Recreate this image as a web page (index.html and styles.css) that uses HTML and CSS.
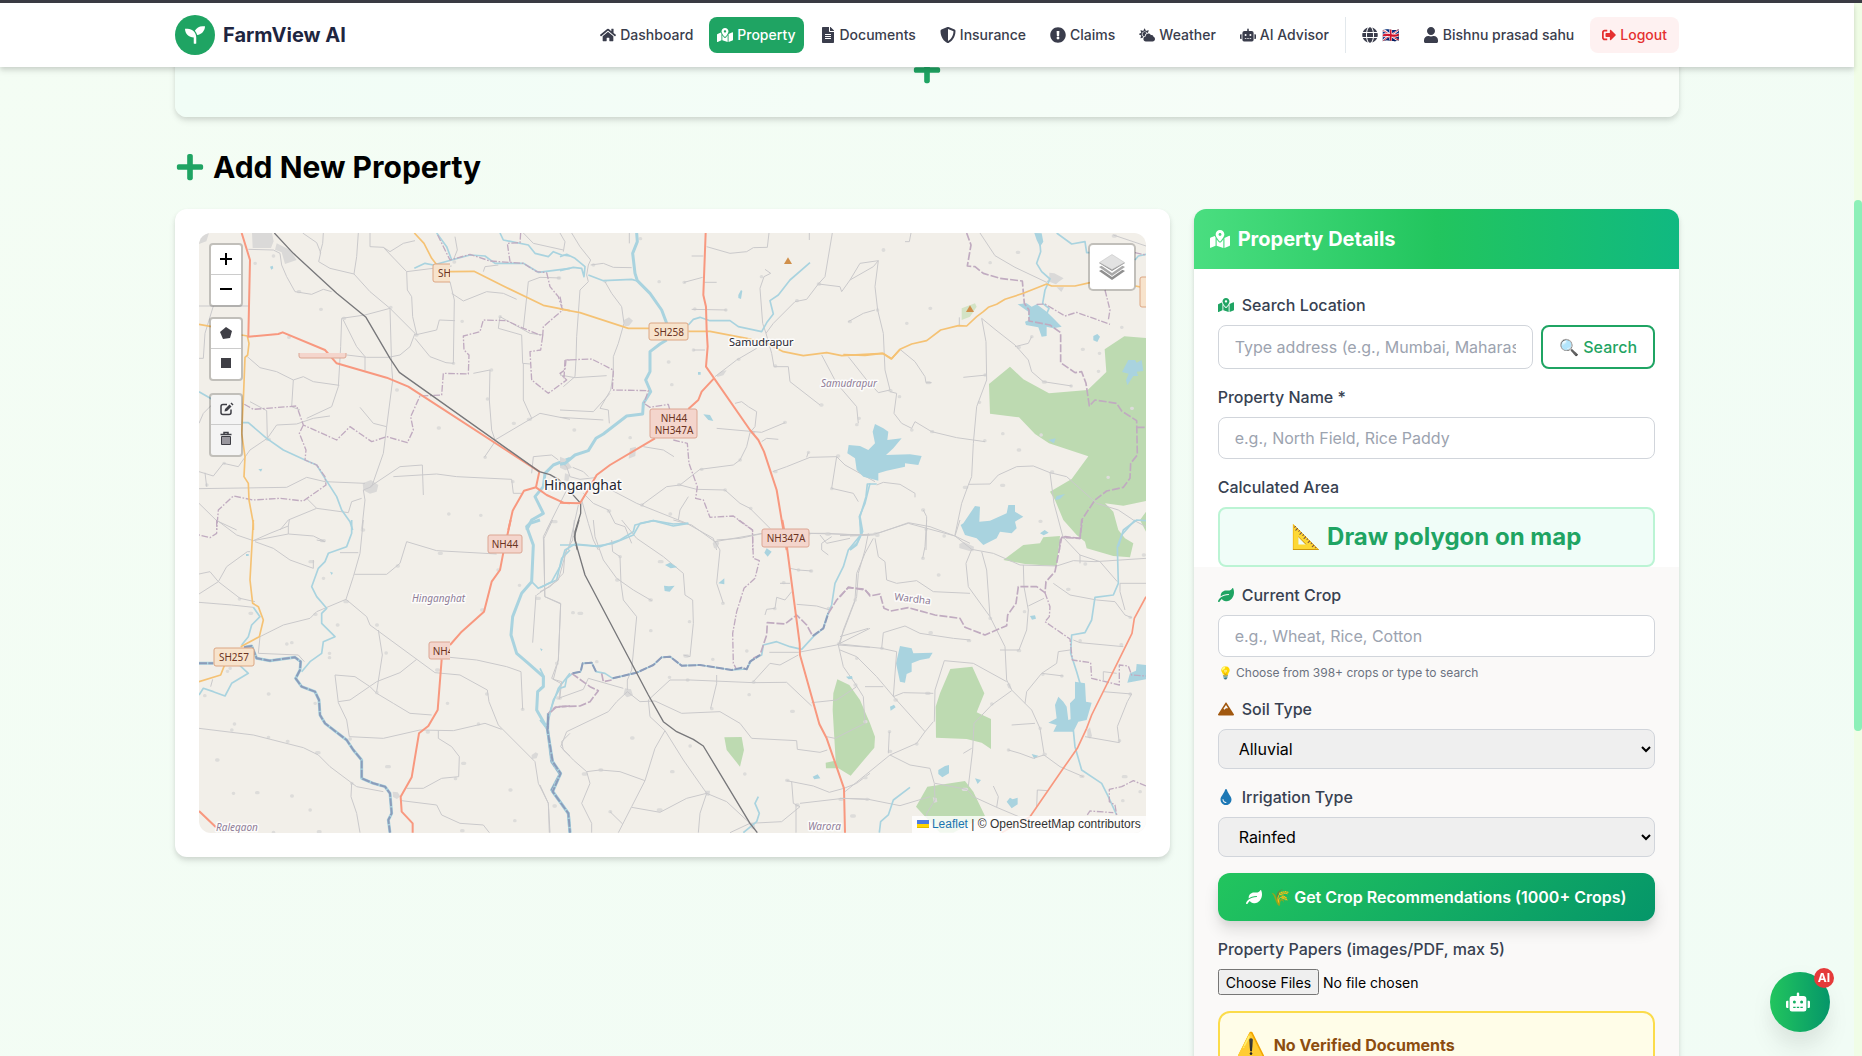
FILE: index.html
```html
<!DOCTYPE html>
<html lang="en">
<head>
<meta charset="utf-8">
<meta name="viewport" content="width=device-width, initial-scale=1">
<title>FarmView AI - Property</title>
<link rel="stylesheet" href="styles.css">
</head>
<body>
<svg class="sprite" aria-hidden="true">
  <symbol id="i-home" viewBox="0 0 576 512"><path d="M280.37 148.26L96 300.11V464a16 16 0 0 0 16 16l112.06-.29a16 16 0 0 0 15.92-16V368a16 16 0 0 1 16-16h64a16 16 0 0 1 16 16v95.64a16 16 0 0 0 16 16.05L464 480a16 16 0 0 0 16-16V300L295.67 148.26a12.19 12.19 0 0 0-15.3 0zM571.6 251.47L488 182.56V44.05a12 12 0 0 0-12-12h-56a12 12 0 0 0-12 12v72.61L318.47 43a48 48 0 0 0-61 0L4.34 251.47a12 12 0 0 0-1.6 16.9l25.5 31A12 12 0 0 0 45.15 301l235.22-193.74a12.19 12.19 0 0 1 15.3 0L530.9 301a12 12 0 0 0 16.9-1.6l25.5-31a12 12 0 0 0-1.7-16.93z"/></symbol>
  <symbol id="i-map" viewBox="0 0 576 512"><path d="M288 0c-69.59 0-126 56.41-126 126 0 56.26 82.35 158.8 113.9 196.02 6.39 7.54 17.82 7.54 24.2 0C331.65 284.8 414 182.26 414 126 414 56.41 357.59 0 288 0zm0 168c-23.2 0-42-18.8-42-42s18.8-42 42-42 42 18.8 42 42-18.8 42-42 42zM20.12 215.95A32.006 32.006 0 0 0 0 245.66v250.32c0 11.32 11.43 19.06 21.94 14.86L160 448V214.92c-8.84-15.98-16.07-31.54-21.25-46.42L20.12 215.95zM288 359.67c-14.07 0-27.38-6.18-36.51-16.96-19.66-23.2-40.57-49.62-59.49-76.72v182l192 64V266c-18.92 27.09-39.82 53.52-59.49 76.72-9.13 10.77-22.44 16.95-36.51 16.95zm266.06-198.51L416 224v288l139.88-55.95A31.996 31.996 0 0 0 576 426.34V176.02c0-11.32-11.43-19.06-21.94-14.86z"/></symbol>
  <symbol id="i-file" viewBox="0 0 384 512"><path d="M224 136V0H24C10.7 0 0 10.7 0 24v464c0 13.3 10.7 24 24 24h336c13.3 0 24-10.7 24-24V160H248c-13.2 0-24-10.8-24-24zm64 236c0 6.6-5.4 12-12 12H108c-6.6 0-12-5.4-12-12v-8c0-6.6 5.4-12 12-12h168c6.6 0 12 5.4 12 12v8zm0-64c0 6.6-5.4 12-12 12H108c-6.6 0-12-5.4-12-12v-8c0-6.6 5.4-12 12-12h168c6.6 0 12 5.4 12 12v8zm0-72v8c0 6.6-5.4 12-12 12H108c-6.6 0-12-5.4-12-12v-8c0-6.6 5.4-12 12-12h168c6.6 0 12 5.4 12 12zm96-114.1v6.1H256V0h6.1c6.4 0 12.5 2.5 17 7l97.9 98c4.5 4.5 7 10.6 7 16.9z"/></symbol>
  <symbol id="i-shield" viewBox="0 0 512 512"><path d="M466.5 83.7l-192-80a48.15 48.15 0 0 0-36.9 0l-192 80C27.7 91.1 16 108.6 16 128c0 198.5 114.5 335.7 221.5 380.3 11.8 4.9 25.1 4.9 36.9 0C360.1 472.6 496 349.3 496 128c0-19.4-11.7-36.9-29.5-44.3zM256.1 446.3l-.1-381 175.9 73.3c-3.3 151.4-82.1 261.1-175.8 307.7z"/></symbol>
  <symbol id="i-alert" viewBox="0 0 512 512"><path d="M504 256c0 136.997-111.043 248-248 248S8 392.997 8 256C8 119.083 119.043 8 256 8s248 111.083 248 248zm-248 50c-25.405 0-46 20.595-46 46s20.595 46 46 46 46-20.595 46-46-20.595-46-46-46zm-43.673-165.346l7.418 136c.347 6.364 5.609 11.346 11.982 11.346h48.546c6.373 0 11.635-4.982 11.982-11.346l7.418-136c.375-6.874-5.098-12.654-11.982-12.654h-63.383c-6.884 0-12.356 5.78-11.981 12.654z"/></symbol>
  <symbol id="i-weather" viewBox="0 0 640 512"><path d="M575.2 325.7c.2-1.9.8-3.7.8-5.6 0-35.3-28.7-64-64-64-12.6 0-24.2 3.8-34.1 10-17.6-38.8-56.5-66-101.9-66-61.8 0-112 50.1-112 112 0 3 .7 5.8.9 8.7-49.6 3.7-88.9 44.7-88.9 95.3 0 53 43 96 96 96h272c53 0 96-43 96-96 0-42.1-27.2-77.4-64.8-90.4zm-430.4-22.6c-43.7-43.7-43.7-114.7 0-158.3 43.7-43.7 114.7-43.7 158.4 0 9.7 9.7 16.9 20.9 22.3 32.7 9.8-3.7 20.1-6 30.7-7.5L386 81.1c4-11.9-7.3-23.1-19.2-19.2L279 91.2 237.5 8.4C232-2.8 216-2.8 210.4 8.4L169 91.2 81.1 61.9C69.3 58 58 69.3 61.9 81.1l29.3 87.8-82.8 41.5c-11.2 5.6-11.2 21.5 0 27.1l82.8 41.4-29.3 87.8c-4 11.9 7.3 23.1 19.2 19.2l76.1-25.3c6.1-12.4 14-23.7 23.6-33.5-13.1-5.4-25.4-13.4-36-24zm-4.8-79.2c0 40.8 29.3 74.8 67.9 82.3 8-4.7 16.3-8.8 25.2-11.7 5.4-44.3 31-82.5 67.4-105C287.3 160.4 258 140 224 140c-46.3 0-84 37.6-84 83.9z"/></symbol>
  <symbol id="i-robot" viewBox="0 0 640 512"><path d="M32,224H64V416H32A31.96,31.96,0,0,1,0,384V256A31.96,31.96,0,0,1,32,224Zm512-48V448a64.06,64.06,0,0,1-64,64H160a64.06,64.06,0,0,1-64-64V176a79.97,79.97,0,0,1,80-80H288V32a32,32,0,0,1,64,0V96H464A79.97,79.97,0,0,1,544,176ZM264,256a40,40,0,1,0-40,40A40,40,0,0,0,264,256Zm-8,128H192v32h64Zm96,0H288v32h64ZM456,256a40,40,0,1,0-40,40A40,40,0,0,0,456,256Zm-8,128H384v32h64ZM640,256V384a31.96,31.96,0,0,1-32,32H576V224h32A31.96,31.96,0,0,1,640,256Z"/></symbol>
  <symbol id="i-globe" viewBox="0 0 496 512"><path d="M336.5 160C322 70.7 287.8 8 248 8s-74 62.7-88.5 152h177zM152 256c0 22.2 1.2 43.5 3.3 64h185.3c2.1-20.5 3.3-41.8 3.3-64s-1.2-43.5-3.3-64H155.3c-2.1 20.5-3.3 41.8-3.3 64zm324.7-96c-28.6-67.9-86.5-120.4-158-141.6 24.4 33.8 41.2 84.7 50 141.6h108zM177.2 18.4C105.8 39.6 47.8 92.1 19.3 160h108c8.7-56.9 25.5-107.8 49.9-141.6zM487.4 192H372.7c2.1 21 3.3 42.5 3.3 64s-1.2 43-3.3 64h114.6c5.5-20.5 8.6-41.8 8.6-64s-3.1-43.5-8.5-64zM120 256c0-21.5 1.2-43 3.3-64H8.6C3.2 212.5 0 233.8 0 256s3.2 43.5 8.6 64h114.6c-2-21-3.2-42.5-3.2-64zm39.5 96c14.5 89.3 48.7 152 88.5 152s74-62.7 88.5-152h-177zm159.3 141.6c71.4-21.2 129.4-73.7 158-141.6h-108c-8.8 56.9-25.6 107.8-50 141.6zM19.3 352c28.6 67.9 86.5 120.4 158 141.6-24.4-33.8-41.2-84.7-50-141.6h-108z"/></symbol>
  <symbol id="i-user" viewBox="0 0 448 512"><path d="M224 256c70.7 0 128-57.3 128-128S294.7 0 224 0 96 57.3 96 128s57.3 128 128 128zm89.6 32h-16.7c-22.2 10.2-46.9 16-72.9 16s-50.6-5.8-72.9-16h-16.7C60.2 288 0 348.2 0 422.4V464c0 26.5 21.5 48 48 48h352c26.5 0 48-21.5 48-48v-41.6c0-74.2-60.2-134.4-134.4-134.4z"/></symbol>
  <symbol id="i-logout" viewBox="0 0 512 512"><path d="M497 273L329 441c-15 15-41 4.5-41-17v-96H152c-13.3 0-24-10.7-24-24v-96c0-13.3 10.7-24 24-24h136V88c0-21.4 25.9-32 41-17l168 168c9.3 9.4 9.3 24.6 0 34zM192 436v-40c0-6.6-5.4-12-12-12H96c-17.7 0-32-14.3-32-32V160c0-17.7 14.3-32 32-32h84c6.6 0 12-5.4 12-12V76c0-6.6-5.4-12-12-12H96c-53 0-96 43-96 96v192c0 53 43 96 96 96h84c6.6 0 12-5.4 12-12z"/></symbol>
  <symbol id="i-plus" viewBox="0 0 448 512"><path d="M416 208H272V64c0-17.67-14.33-32-32-32h-32c-17.67 0-32 14.33-32 32v144H32c-17.67 0-32 14.33-32 32v32c0 17.67 14.33 32 32 32h144v144c0 17.67 14.33 32 32 32h32c17.67 0 32-14.33 32-32V304h144c17.67 0 32-14.33 32-32v-32c0-17.67-14.33-32-32-32z"/></symbol>
  <symbol id="i-leaf" viewBox="0 0 576 512"><path d="M546.2 9.7c-5.6-12.5-21.6-13-28.3-1.2C486.9 62.4 431.4 96 368 96h-80C182 96 96 182 96 288c0 7 .8 13.7 1.5 20.5C161.3 262.8 253.4 224 384 224c8.8 0 16 7.2 16 16s-7.2 16-16 16C132.6 256 26 410.1 2.4 468c-6.6 16.3 1.2 34.9 17.5 41.6 16.4 6.8 35-1.1 41.8-17.3 1.5-3.6 20.9-47.9 71.9-90.6 32.4 43.9 94 85.8 174.9 77.2C465.5 467.5 576 326.7 576 154.3c0-50.2-10.8-102.2-29.8-144.6z"/></symbol>
  <symbol id="i-mountain" viewBox="0 0 640 512"><path d="M634.92 462.7l-288-448C341.03 5.54 330.89 0 320 0s-21.03 5.54-26.92 14.7l-288 448a32.001 32.001 0 0 0-1.17 32.64A32.004 32.004 0 0 0 32 512h576c11.71 0 22.48-6.39 28.09-16.67a31.983 31.983 0 0 0-1.17-32.63zM320 91.18L405.39 224H320l-64 64-38.06-38.06L320 91.18z"/></symbol>
  <symbol id="i-drop" viewBox="0 0 352 512"><path d="M205.22 22.09c-7.94-28.78-49.44-30.12-58.44 0C100.01 179.85 0 222.72 0 333.91 0 432.35 78.72 512 176 512s176-79.65 176-178.09c0-111.75-99.79-153.34-146.78-311.82zM176 448c-61.75 0-112-50.25-112-112 0-8.84 7.16-16 16-16s16 7.16 16 16c0 44.11 35.89 80 80 80 8.84 0 16 7.16 16 16s-7.16 16-16 16z"/></symbol>
  <symbol id="i-seedling" viewBox="0 0 512 512"><path d="M64 96H0c0 123.7 100.3 224 224 224v144c0 8.8 7.2 16 16 16h32c8.8 0 16-7.2 16-16V320C288 196.3 187.7 96 64 96zm384-64c-84.2 0-157.4 46.5-195.7 115.2 27.7 30.2 48.2 66.9 59 107.6C424 243.1 512 147.9 512 32h-64z"/></symbol>
</svg>

<div class="app">
  <div class="window">
    <header class="topbar">
      <div class="container topbar-row">
        <a class="brand" href="#">
          <span class="brand-mark"><svg class="icon icon-20"><use href="#i-seedling"/></svg></span>
          <span>FarmView AI</span>
        </a>
        <nav class="nav" aria-label="Main">
          <a class="nav-link" href="#"><svg class="icon"><use href="#i-home"/></svg>Dashboard</a>
          <a class="nav-link nav-link-active" href="#"><svg class="icon"><use href="#i-map"/></svg>Property</a>
          <a class="nav-link" href="#"><svg class="icon"><use href="#i-file"/></svg>Documents</a>
          <a class="nav-link" href="#"><svg class="icon"><use href="#i-shield"/></svg>Insurance</a>
          <a class="nav-link" href="#"><svg class="icon"><use href="#i-alert"/></svg>Claims</a>
          <a class="nav-link" href="#"><svg class="icon"><use href="#i-weather"/></svg>Weather</a>
          <a class="nav-link" href="#"><svg class="icon"><use href="#i-robot"/></svg>AI Advisor</a>
          <div class="nav-account">
            <button class="nav-link" type="button" aria-label="Language"><svg class="icon"><use href="#i-globe"/></svg><span>🇬🇧</span></button>
            <a class="nav-link" href="#"><svg class="icon"><use href="#i-user"/></svg>Bishnu prasad sahu</a>
            <button class="nav-link nav-logout" type="button"><svg class="icon icon-14"><use href="#i-logout"/></svg>Logout</button>
          </div>
        </nav>
      </div>
    </header>

    <main class="container page">
      <section class="add-card"><svg class="icon icon-30"><use href="#i-plus"/></svg></section>

      <h2 class="page-title"><svg class="icon icon-30"><use href="#i-plus"/></svg>Add New Property</h2>

      <div class="columns">
        <section class="card map-card">
          <div class="map">
            <svg class="map-art" viewBox="0 0 947 600" preserveAspectRatio="xMinYMin slice" role="img" aria-label="Map of Hinganghat and Samudrapur">
              <!-- north-west -->
              <g transform="scale(.33333) translate(-87 -99)">
                <path class="town" d="M246 99h60l5 25-8 20h-55zM320 130l40 20 20 30-35 12-10-35-20-8zM87 99h30l-8 25-22 8zM578 850l25-10 22 15-5 20-20 6-20-10z"/>
                <path class="dots" d="M255 190h1M310 168h1M452 328h2M520 355h4M662 322h1M738 405h3M852 186h2M876 364h1M990 350h1M850 490h1M945 772h1M805 684h3M952 597h1M1030 670h3M1075 658h6M292 718h6M385 275h4M162 790h1M110 855h1M356 412h2M680 570h2M964 510h1M1165 234h4M836 942h1M932 946h1M1028 845h1M1150 965h8"/>
                <path class="road" d="M235 148L310 150 330 160 335 195 350 230 375 275 425 283 460 268 485 275M398 99L440 128 452 158 446 185 480 205 552 222 600 275 660 325 735 400 720 440 690 465 655 472 590 472 530 465M460 99L458 130 450 160M565 99L560 170 552 222M600 99V140L640 142 660 155 700 130 735 122M640 142L710 215 845 198M710 215L712 270 725 290 728 350 740 402M735 405L800 390 808 360 855 362M840 245L853 300 850 490 828 488 780 470 735 415M845 280L880 303 950 275 1000 280 1040 298M1060 385L1075 245 1110 232 1170 234M515 355L585 345 660 325M515 355L512 440 505 560 485 620 410 655M520 360L560 440 585 470 585 512M660 325L665 500 668 540 650 680 640 760 605 860 580 870 585 900 575 990M232 470L270 503 320 515 370 540 400 530 430 545 508 556M370 540L365 620 390 630M240 605L290 632 292 715M130 318L105 400 100 475H87M87 318H235M990 350L1080 400 1120 405M990 350L985 385 1055 405 1058 490 1080 492M1060 490V600L1085 655M910 520L960 510 958 600 965 690 975 720 1080 658 1110 640 1200 658M975 725L943 772M1085 820L1090 770 1145 765 1165 780M87 815L130 828 160 790 205 800 240 750 292 715 320 675 380 672M105 818L110 860M87 866L350 862 410 832 465 845 585 850M600 860L690 800 757 795 760 885M670 830L800 822 860 830 1025 838 1030 880H1055M87 910L140 962 200 990M87 670L100 640 125 615M380 672L430 655 480 648M570 622L610 670 650 680M535 938L440 925 355 960 330 990M440 925L410 895M535 938L545 905 575 895M1130 990L1190 870M1060 99L1090 130 1180 150M855 110L862 150 850 180M940 215L945 200 985 195"/>
                <path class="river" d="M733 205L765 190 790 195 845 180 900 165 945 168 975 190 1060 190 1105 217 1200 205M800 99L830 140 845 180M990 99L1000 120 1075 135 1095 160 1135 170 1150 155 1175 165 1200 168M87 575L125 597M215 668H235L290 715 340 750 410 782 440 795 465 835 500 890 515 930 540 965 548 990"/>
                <path class="river wide" d="M1200 775L1150 795 1125 820 1120 860 1095 890 1120 940 1085 960 1070 990"/>
                <path class="water" d="M300 200l8-3 2 8-6 4zM265 808l12-2-4 9z"/>
                <path class="border" d="M1130 218L1140 260 1165 290 1178 330 1120 380 1118 408 1060 385 1010 362 940 360 930 395 880 408 882 450 897 465 895 522 820 520 815 585 750 588 722 650 730 690 712 728 650 710 605 725 540 680 500 720 400 675 380 618 250 628 218 610M400 675L388 700 408 750 405 780 440 795 465 830 468 855 400 903 330 895 250 900 190 888 145 930 140 990M1118 408L1112 450 1080 455 1085 540 1135 580 1190 540 1170 520 1185 510 1188 480H1200M803 105L840 180 900 163 960 183 1060 190 1100 215 1130 218M1052 99L1050 128 1012 130 1020 185"/>
                <path class="state" d="M733 99L762 130 785 175 805 200 840 215 912 214 1000 258 1120 316 1200 332M87 373L125 380M215 405L232 408 237 430 233 465 225 472 220 600 215 700 225 770 222 830 235 850 237 900 250 970V990"/>
                <path class="trunk" d="M215 99L240 180 235 410 325 402 338 397 465 450 500 490 650 533 715 560 1108 815 1098 862 1062 872 1028 932 1015 990M1098 862L1130 885 1180 908 1200 910"/>
                <path class="rail" d="M313 99L370 160 500 280 588 352 660 475 688 517 1108 815 1140 824 1165 838"/>
              </g>
              <!-- north -->
              <g transform="scale(.33333) translate(1083 -69)">
                <path class="town" d="M192 330l15-8 12 10-12 15-14 2zM470 495l15-12 15-2-10 15-18 5zM0 740l18 8 18 25-20 8-16-8zM210 715l18-5-2 28-20 8zM15 790l15 5-5 18-12-2z"/>
                <path class="dots" d="M297 215h1M372 217h2M240 86h2M404 297h1M497 300h1M325 456h2M335 524h1M210 683h1M400 420h1M424 778h2M540 750h1M495 840h1M356 824h3M245 885h2M145 903h4M330 912h2M572 895h1M635 965h1M535 448h2M674 637h2M575 667h6M645 785h3M745 727h1M833 738h3M815 836h1M783 585h3M890 644h1M897 625h1M970 120h1M952 300h1M868 335h3M710 272h2M775 222h4M604 200h1M645 468h2M42 660h2M990 542h3M465 998h6M745 972h2M805 972h3M100 165h1M135 214h1"/>
                <path class="road" d="M35 69L60 110 92 150 85 165 80 195 85 215 60 240 55 310 50 380 48 450 45 500 10 530M0 495L45 503 140 497M92 165L130 160 160 172 215 173M208 69V100M135 215L155 250 185 290 192 340 175 400 160 440V490L152 540 120 595 145 600 148 640M150 550L100 605 0 600M0 622L130 630M440 110L510 130 560 125 580 113 622 112 627 69M395 138H430M372 217L428 202M430 217H470M395 298L500 300M817 69L795 200 775 222 840 230 845 245 870 210 900 160 955 152 945 230 953 300 970 370 975 480 990 540 955 548 920 510 865 440M870 210L940 170 955 152M945 300L910 310 865 335M775 222L740 268 705 275 640 340 618 370 608 340 600 235 612 200 632 190 615 178M618 370L635 430 642 470 685 470 690 515 780 585M590 415L530 450 465 500M785 435L830 520 890 590 895 640M435 420H400M525 580L545 575 565 590 590 605 585 650 570 668M470 655L605 667 675 638M570 668L560 710 540 750 520 765 420 778 360 825 320 830 245 885M605 695L620 685 655 688M638 785L680 770 750 742 830 740 855 765 945 815M740 742L745 727M830 740L815 835 880 850 895 875M360 825L410 838 495 840 540 880 570 895 630 955M250 710L310 720 342 740M150 838L230 880 380 940 460 985 470 1020M385 860L360 900 355 930M0 755L20 770 30 800 60 808 105 803M38 772L70 785 85 800M70 850L100 880 145 900 165 940 195 950 215 1000M65 870L85 940 100 990 115 1020M55 885L25 1020M470 990L540 985 610 970M745 970L800 970 890 975M800 1000L870 985M800 1000L780 975M748 69V90M0 69L15 95 10 125"/>
                <path class="river wide" d="M230 69L232 95 218 130 225 190 232 212 270 250 305 300 320 340M320 390L300 402 270 425V485L257 510 272 545 250 580 248 612 200 618 130 672 108 685 85 722 45 735 15 760 0 763"/>
                <path class="river" d="M0 140L20 133 45 145 75 170 72 200 65 175 40 172 0 182M85 195L130 212 215 208 232 213M385 345L400 328 420 322 450 332 510 332 535 350 605 365 622 335 640 312 630 272 655 255 690 210 750 158M0 1005H60L120 1010 180 990 220 965 225 945 280 932 340 942 385 940M930 820L915 880 898 920 905 970 890 1005 870 1020"/>
                <path class="water" d="M535 255l8-15 4 3-4 24-8-3zM430 613l20 2 10 18-15-3zM414 486h8v8h-8z"/>
                <path class="border" d="M12 505L15 450 95 447 160 480 157 540 265 542 252 580 270 592 325 583 332 610M340 690L382 700 387 760 412 830 407 865 430 870 450 922 520 918 578 960V1020M0 260L8 300"/>
                <path class="state" d="M0 297L60 308 205 355H270M385 364H450L560 385 620 400 670 425 730 437 800 428 845 437 970 430 995 446 1020 418"/>
                <path class="rail" d="M-5 808L35 850 62 880V910L45 965V990L52 1020"/>
                <path class="trunk" d="M437 69L430 255 438 290 440 360 443 410 438 470 570 660 595 690 612 725 650 840 680 1020M462 505L425 545 415 570 385 597M285 685L150 765 110 795 90 830 60 880 0 878"/>
                <path class="peak" d="M672 162h24l-12-20z"/>
              </g>
              <!-- north-east -->
              <g transform="scale(.33333) translate(1953 -69)">
                <path class="forest" d="M480 470L520 508 597 550 713 540 769 486 764 418 823 379 888 384V873L820 887 765 880 790 905 805 960 825 985 850 1000 840 1042 790 1038 710 1015 705 995 680 975 640 930 615 870 600 845 665 807 715 739 597 700 555 672 507 622 420 611 417 522zM888 905L870 930 888 965z"/>
                <path class="park" d="M335 295L375 280 380 290 360 320 335 330z"/>
                <path class="town" d="M598 188l15 2 28 15-15 10-8 8-20-8zM620 232h22l-8 14z"/>
                <path class="dots" d="M502 127h4M100 120h1M240 295h2M170 340h1M545 380h1M505 412h3M697 418h3M748 430h1M745 484h1M815 352h1M580 516h6M663 528h1M405 495h1M404 692h1M573 675h1M505 720h4M455 826h6M343 832h7M774 802h1M605 786h3M458 671h1M388 577h1M185 660h1M245 665h3M148 560h1M232 518h6M218 900h3M228 958h1M570 934h3M790 78h6M420 158h1M845 595h2M335 1008h12M80 976h4"/>
                <path class="water" d="M75 642L100 655 115 665 112 690 155 685 130 715 108 735 180 733 215 738 205 765 165 760 165 770 110 782 85 790 85 812 40 800 20 780 15 745-8 730-4 705 30 708 55 720 75 700 68 665zM503 283L530 280 545 290 560 283 590 305 610 325 635 350 610 355 590 350 590 378 575 380 565 352 528 345 525 335 537 330 535 305zM730 378l12-6 8 8-8 16-12-5zM835 450h20l5 8 15-8 5 33-20 2 5 13-15 0-18 28-4-15 8-20-20-5zM553 69L575 70 580 95 570 110 560 90zM340 940L375 888 390 890 388 935 420 932 470 910 475 885 495 885 495 905 520 920 495 935 500 955 485 970 450 965 440 985 400 1005 380 985 345 975 332 945zM615 870l5-12 25-6-15 15zM595 690l22-5-5 15zM570 970l14-10 12 8-15 8z"/>
                <path class="road" d="M183 69L178 95H165M390 69L435 137 495 172 590 217 600 205M395 325L408 395 410 510 380 590 370 700 365 800 355 825 335 880 315 975M395 325L435 358 495 405 535 450 545 485 580 515 665 528M545 380L535 400 495 410M410 495L340 502M150 418L195 455 225 500 228 518H245M120 545L140 550 132 610 155 640 185 655 195 635 245 665 320 683 405 695M355 823L420 822 445 795 500 770 550 768 600 788 650 800 740 880 805 900 850 930 888 950M600 788L612 880 640 985M0 978L70 975 175 938 240 950 315 978 360 1000M220 900L230 920 228 1020M80 825L100 817 150 823 195 850V862M328 345V322M790 75L888 108"/>
                <path class="river" d="M570 100L572 125 560 160 575 185 600 207 585 240 578 280 597 295 590 312M620 69L665 102 705 95 710 128H718M855 150L865 138 888 133M80 822H52L48 860 30 920 38 965 20 1000 0 1018M888 932L860 930 820 960 805 1010"/>
                <path class="border thick" d="M350 69L363 105 352 168 375 170 400 190 450 205 517 213 523 280 537 300 537 333 600 345 632 368 632 458 675 488 695 485 708 520 718 588 735 570 800 580 815 603 860 632 862 735 842 760 840 805 820 832 770 843 735 870 695 930 690 985 645 980 630 990 628 1020M860 652H888"/>
                <path class="border" d="M560 283L585 282 645 318 680 307 780 343M765 240L780 300 775 330M855 128L888 135"/>
                <path class="state" d="M-20 434L45 436 97 430 124 447 150 418 185 402 230 392 272 360 325 347 350 348 380 320 400 305 415 292 440 283 465 268 520 250 590 222 605 228 675 228 720 218M857 228L880 233"/>
                <path class="peak" d="M348 306h24l-12-20z"/>
              </g>
              <!-- south-west -->
              <g transform="scale(.33333) translate(-87 861)">
                <path class="town" d="M668 815l15 2 8 12-10 8-12-6zM1085 705l12-8 8 4-5 14-15 2z"/>
                <path class="dots" d="M365 368h1M350 372h1M502 315h2M478 400h1M478 413h1M620 315h2M525 245h7M577 30h4M460 175h1M420 125h8M455 62h8M208 237h1M240 280h5M435 283h3M295 522h2M185 630h1M193 612h1M295 652h1M352 664h2M140 720h4M440 698h7M260 818h4M190 820h1M365 828h2M650 740h8M545 790h1M620 518h1M648 399h1M800 450h5M832 550h1M435 550h1M772 636h3M878 730h6M856 776h1M1020 810h3M1057 568h2M1160 430h1M950 522h1M935 270h6M682 138h3M808 100h6M1100 235h8M984 150h1M1048 196h1M1152 858h1M1163 534h8M445 935h5M875 932h4M310 937h1M1034 902h1M420 870h1M180 445h1M172 454h1M104 527h1M925 612h1M540 657h1"/>
                <path class="road" d="M140 0L200 45 250 62 300 40 355 18 358 0M355 18V42L250 62M355 42L430 48 465 65 440 60M255 65L310 85 360 120 430 145V120M240 95L232 95 170 140 145 185 120 155 87 162M145 185L87 222M145 185L210 235 255 245M87 247L185 255 250 262M580 0L570 100 550 170 528 238 590 290 600 315 795 458 870 465 952 510 957 545 985 615 1095 725 1105 790 1135 850 1140 938M528 238L440 275 420 295 340 315 270 350 265 400 385 405 403 425M510 98H565M553 163H650L690 130 710 65 800 92 980 102M625 330L637 405 620 515M740 418L690 458 620 485 540 540 505 545M505 548L495 465 555 470 600 500 620 520 670 550 720 580 785 585M505 548L530 600 538 650 640 655 750 630 850 632 945 610 995 628M805 632V655L845 680 868 710 866 770 815 775 760 805 710 805M87 625L250 645 400 683 445 705 480 740 540 785 560 800 640 815M545 790L543 830 560 880 570 938M695 842L800 855 815 885 870 910 940 915 958 938M840 412L920 420 1010 440 1053 455 1058 568M1145 0L1120 50 1125 230 1172 250 1165 420 1145 475 1172 490 1168 538M1098 225L1088 368M1100 225L1165 180 1190 90M1200 640L1175 665 1180 690 1200 708M128 478L122 500"/>
                <path class="river" d="M545 0V40L530 80 475 100 465 125 445 145 425 200 440 230 470 265 455 280V310L495 350 460 365 455 400 420 425 395 455M250 262L270 290 245 315 235 350 215 375M87 525L100 505 130 515 165 528 185 490 235 460 210 437M1085 185L1105 205 1160 180 1175 115 1200 90M1200 460L1165 505 1145 560 1135 590"/>
                <path class="river wide" d="M1110 0L1080 10 1070 20 1090 75 1085 185 1055 220 1028 290 1023 345 1040 400 1075 430 1120 470V500L1103 515 1100 570 1133 628M87 430H130M222 382L245 378 260 415 300 422 375 412 392 425 390 450 377 475 395 500 435 515 447 540 450 585 465 610 530 660 550 690 575 720V775L610 790 645 800 660 820 665 880 655 900 660 938M1135 580L1133 628 1145 725 1170 762 1145 810 1195 880 1200 938"/>
                <path class="water" d="M1110 385l8 3-4 6zM480 155l9 3-4 7zM228 102h8v6h-8z"/>
                <path class="border" d="M140 0V40L120 53 87 45"/>
                <path class="riverborder" d="M87 430H130M222 382L245 378 260 415 300 422 375 412 392 425 390 450 377 475 395 500 435 515 447 540 450 585 465 610 530 660 550 690 575 720V775L610 790 645 800 660 820 665 880 655 900 660 938M1135 580L1133 628 1145 725 1170 762 1145 810 1195 880 1200 938"/>
                <path class="border thick" d="M1200 558L1155 562 1135 580"/>
                <path class="state" d="M250 0L240 180 248 250 265 260 280 300 268 350 212 380M163 437L152 465 87 485"/>
                <path class="trunk" d="M1022 0L1012 46M1000 98L990 150 965 185 942 275 875 335 840 375M815 418L803 570 775 618 747 640 725 772 692 830 695 875 728 910V938M87 873L138 922"/>
              </g>
              <!-- south -->
              <g transform="scale(.33333) translate(1023 861)">
                <path class="forest" d="M892 478L928 495 960 540 990 610 1005 650 1003 683 932 767 888 740 878 570 880 520zM553 652L605 651 612 690 600 740 560 690zM857 728L885 722 900 745 858 745z"/>
                <path class="town" d="M255 505l18 3 6 18-18 6-10-10zM518 70l12-8 8 8-8 16-8-2zM495 812h15l-2 16-10-2zM625 908l18 2 4 20-12-4z"/>
                <path class="dots" d="M98 278h2M117 280h8M332 332h1M50 430h1M170 425h1M518 418h1M275 654h4M395 755h4M130 762h8M180 750h5M210 875h2M355 870h8M45 858h1M330 240h4M230 180h4M240 110h1M358 125h8M548 250h2M620 393h1M627 524h1M755 574h5M515 566h1M640 486h2M448 305h1M435 408h8M730 188h2M812 153h3M704 266h1M865 265h1M895 372h3M975 605h3M945 495h3M740 781h4M900 838h6M770 855h4M935 888h8M450 678h1M614 762h1M775 150h1M860 42h4M442 480h2M388 472h1"/>
                <path class="road" d="M38 0L12 55 14 230 62 252 55 420 40 478 65 485 60 530M103 0L98 60 75 100 70 160 30 200 0 215M160 0L165 50 190 120 230 175 280 210 335 242M215 60L218 95 240 110 243 190 250 240 290 290 275 450 262 480V510M245 0L290 55 370 110 430 160 435 225 458 240 460 310 450 410 430 405M400 0L455 15 525 65 540 90 530 190 550 250M525 65L667 40M805 40L990 45M875 50L845 70V90L865 105M750 145L775 150 815 153M755 215L735 240 710 232 705 265 680 268 675 285M770 253L830 258 870 270M720 190H750M688 397H775L890 375 990 325M895 375L990 382M895 375L950 230 955 160 975 90 985 40M55 535L130 508 145 475 250 505M325 540L390 480H450L640 488 740 487 780 525 815 558M640 485L690 430 720 435 775 405M530 465V490L512 565M262 515L300 545 345 543 425 580 540 575 600 610 635 655 770 662 772 688 840 697 862 690M262 515L230 545 205 575 80 635 62 680 100 720 140 755 180 750 240 755 315 782 275 860 235 938M315 782L345 685 375 632 330 590 325 540M375 632L430 720 500 820 560 845 630 910 725 905 780 860 760 850 755 785M500 820L480 880 475 938M500 820L440 835 360 877 275 862M210 875L248 912M140 755L150 790 125 850 155 910V938M740 782L820 798 868 817 912 805 950 790 990 760M780 850L910 835 990 838M768 855V938M815 548L890 540 950 500M860 650L885 655 975 610 970 530 945 490 910 440 895 375M630 910L570 938M0 795L25 850 28 938"/>
                <path class="river" d="M0 203L35 185 60 140 75 90 105 72 170 78 220 70 280 45 300 10 340 2 400 18 445 10M28 590L40 540 60 505 75 500 80 475 98 460 122 455 128 430 155 428 168 455 195 460 218 475 290 458 340 435 365 412 390 410 425 437 480 435 575 450 620 447 635 420 665 405 670 375 710 365 750 380 785 388 820 350 850 325 860 290 875 255 885 190 910 140 925 90 962 45 960 0M0 445L12 470 10 500 0 505M0 600L22 628M655 830L645 850 658 880 650 905 610 938"/>
                <path class="river wide" d="M22 628L38 725 62 760 38 815 85 880 90 938"/>
                <path class="water" d="M375 135l15-7 22 14-20 3zM372 197l15 2 17-2-15 18-15-2zM535 190l18-15v18zM680 85l15 10-12 15-10-12zM818 770l15-7 8 12-18 3zM918 470l18-2 2 8-12 2z"/>
                <path class="border" d="M595 0L637 30 640 115 658 122 645 175 612 205 590 275 578 340 580 430 588 445"/>
                <path class="border thick" d="M95 460L150 500 175 512 150 545 120 558 50 560 28 580M185 460L190 485 215 480M640 415L660 405 680 345 682 308 735 312 770 285 800 315 818 348M865 280L890 240 925 202 975 210 990 225"/>
                <path class="riverborder" d="M98 460L122 455 128 430 155 428 168 455M218 475L290 458 340 435 365 412 390 410 425 437 480 435 575 450 605 443 620 448 630 425 660 405M818 348L850 325 865 280M25 590L22 628 38 725 62 760 38 815 85 880 90 938"/>
                <path class="rail" d="M117 0L103 50 112 85 135 165 325 525 370 605 410 635 460 658 490 678 630 910 652 938"/>
                <path class="trunk" d="M727 0L738 60 779 370 780 405 838 612 860 655 912 805 915 938"/>
              </g>
              <!-- south-east -->
              <g transform="scale(.33333) translate(1923 861)">
                <path class="forest" d="M490 120L550 75 600 70 610 52 660 48 650 138 555 132zM331 447L397 440 433 520 410 577 453 597V687L425 668 380 657 288 653 287 560 300 520zM228 860L262 800 375 783 400 815 435 888 340 938H300z"/>
                <path class="town" d="M358 72l14-6 30 14-2 14-14-2-28-8zM742 630l8-8 6 26-6 8-8-6zM278 832l12 2 2 12-10 2zM500 492l10-2 5 18-10-4z"/>
                <path class="dots" d="M248 115h2M105 42h8M312 48h1M295 165h2M270 338h4M385 362h4M535 392h4M450 295h2M553 275h1M683 208h4M735 132h2M45 240h1M260 520h7M165 540h4M230 672h1M148 694h4M148 635h1M75 773h3M80 838h3M370 808h10M612 703h4M505 690h1M723 769h6M665 468h1M608 463h1M850 770h8M848 842h1M843 374h2M870 522h1M838 662h1M870 292h2M125 385h2M50 415h1M455 552h1M600 625h1M910 105h3M720 362h1M900 815h1"/>
                <path class="water" d="M180 378L215 385 220 400 278 398 268 415 240 420 215 430V455L200 462 195 488 180 485 168 430 175 400zM705 485L735 490 738 545 755 548 740 600 715 605 700 635 640 635 650 615 625 608 650 595 645 555 655 530 670 545 680 560 685 600 692 598 690 550 705 535zM862 488L870 460 888 452 890 432 918 435V478zM295 750l20-12 12-3v25l-20 12-12-10zM405 775l18 5-10 12zM500 845l10-12 8 5 15-5v20l-18 12zM575 702l20 5-12 10zM570 288l15-2 3 10-12 3zM150 560l12-6 5 8-15 10z"/>
                <path class="road" d="M0 47L105 42 205 10 345 48 395 88 460 100 540 135 650 138 700 122 765 125 918 115M345 48L360 0M260 0L255 80 248 115M100 55L75 100 50 160 45 240 10 330 0 370M105 55L115 110 135 125 140 180 170 190 230 182 280 215 390 220M395 88L378 130 385 200 450 290 495 380 500 480 515 510 575 570 600 625 612 700M425 95L440 150 450 290M550 135L552 200 565 270 560 330 537 390H480M612 235L565 258M668 50L720 105 780 125 832 185M720 105V130M640 190L690 225 770 240 825 245 855 285 875 293M840 190H918M840 190V215L855 270M0 350L85 325M0 372L125 385 130 338 195 318 240 340 340 355 390 360M125 385L170 395 160 530 190 518 280 520M0 390L50 410 110 470 165 535 255 635M280 605L255 635 230 670 150 705 15 815M150 705L210 735 270 745 283 790 285 840 260 880V890M148 635L145 700M283 605L285 510 313 422 400 430 500 485M515 512L455 555 402 610 398 690 385 800M370 700L395 685M555 550L560 515 605 460 670 468M605 460L650 430 655 395 690 390M285 790L380 808 400 830 470 862 560 900M460 798L475 830 470 862M515 615L585 610M505 690L540 700 580 715 612 705 660 740 730 770M0 835L85 838 180 857 270 830M700 360L720 368 850 380M790 480V455L830 460M790 515L875 522 862 545 832 620 838 668 735 650M590 860L592 810 625 812M75 500H130"/>
                <path class="river" d="M885 0L845 45 832 80 835 190 820 225 765 232 755 300 735 338 695 345 692 400 710 455 720 490M700 630L705 680 725 750 785 790 805 830 830 885M210 802L160 840 145 885 122 905 118 938"/>
                <path class="border thick" d="M0 230L25 202 75 208 90 228 120 222 132 265 152 273 205 263 285 285 360 295 375 322 435 345 500 317 503 285 528 250 535 200H590L615 218 618 185 645 155 665 52 720 55 727 0"/>
                <path class="border" d="M615 218L630 260 628 290 615 305 690 357 697 420 752 428 755 475 838 495V435L865 438 875 465 918 468M742 885L750 873 820 878M918 798L880 782 845 800 808 808V845L825 855 830 885"/>
                <path class="trunk thin" d="M918 230L883 295 876 340 755 585 740 625 712 685 670 745 570 890 485 938"/>
              </g>
              <!-- route shields -->
              <clipPath id="cut"><path d="M0 0h251v600H0z"/></clipPath>
              <g class="shield-state">
                <rect x="450" y="90" width="39" height="17" rx="2"/><rect x="15" y="415" width="40" height="18" rx="2"/><rect x="941" y="44" width="40" height="30" rx="2"/>
                <rect x="234" y="31" width="39" height="18" rx="2" clip-path="url(#cut)"/>
              </g>
              <g class="shield-national">
                <rect x="451" y="176" width="47" height="29" rx="2"/><rect x="563" y="296" width="47" height="18" rx="2"/><rect x="289" y="302" width="34" height="18" rx="2"/>
                <rect x="230" y="409" width="34" height="17" rx="2" clip-path="url(#cut)"/><path d="M100 120v3q0 2 2 2h43q2 0 2-2v-3"/>
              </g>
              <g class="shield-text">
                <text x="470" y="103">SH258</text><text x="35" y="428">SH257</text><text x="475" y="189">NH44</text><text x="475" y="201">NH347A</text><text x="587" y="309">NH347A</text><text x="306" y="315">NH44</text>
                <g clip-path="url(#cut)"><text x="254" y="44">SH258</text><text x="247" y="422">NH44</text></g>
              </g>
              <g class="place"><text class="city" x="345" y="257">Hinganghat</text><text x="530" y="113">Samudrapur</text></g>
              <g class="district"><text x="622" y="154">Samudrapur</text><text x="213" y="369">Hinganghat</text><text x="17" y="598">Ralegaon</text><text x="609" y="597">Warora</text><text class="upright" x="695" y="367" transform="rotate(7 695 367)">Wardha</text></g>
            </svg>

            <div class="map-tools">
              <div class="tool-group"><button type="button" aria-label="Zoom in"><svg viewBox="0 0 28 28"><path class="glyph-line" d="M8 14h12M14 8v12"/></svg></button><button type="button" aria-label="Zoom out"><svg viewBox="0 0 28 28"><path class="glyph-line" d="M8 14h12"/></svg></button></div>
              <div class="tool-group"><button type="button" aria-label="Draw a polygon"><svg viewBox="0 0 28 28"><path class="glyph" d="M14 8l6 4-2 7-7 1-3-7z"/></svg></button><button type="button" aria-label="Draw a rectangle"><svg viewBox="0 0 28 28"><path class="glyph" d="M9 9h10v10H9z"/></svg></button></div>
              <div class="tool-group tool-group-off"><button type="button" aria-label="Edit layers"><svg viewBox="0 0 28 28"><path class="glyph-thin" d="M15 9.500h-4q-2 0-2 2v6q0 2 2 2h6q2 0 2-2v-3"/><path class="glyph" d="M12.500 16.500l.5-2.500 4.500-4.500 2 2-4.500 4.500zM18.500 8.500l1-1 2 2-1 1z"/></svg></button><button type="button" aria-label="Delete layers"><svg viewBox="0 0 28 28"><path class="glyph-thin" d="M8.500 9.500h11M12 9V7.500h4V9"/><path class="glyph-gray" d="M9.500 11.500h9v8h-9z"/></svg></button></div>
            </div>

            <button class="layers" type="button" aria-label="Layers"><svg viewBox="0 0 26 26"><path fill="#8f8f8f" d="M0 17l4-2 9 6 9-6 4 2-13 9z"/><path fill="#fff" d="M0 14l4-2h18l4 2-13 9z"/><path fill="#a9a9a9" d="M0 13l4-2h18l4 2-13 9z"/><path fill="#fff" d="M0 10l4-2h18l4 2-13 9z"/><path fill="#8f8f8f" d="M0 9l4-2h18l4 2-13 8z"/><path fill="#e2e2e2" stroke="#c6c6c6" stroke-width=".6" d="M.5 8.500L13 .5l12.500 8L13 15.500z"/></svg></button>

            <div class="attribution"><a href="#"><svg width="12" height="8" viewBox="0 0 12 8"><path fill="#4c7be1" d="M0 0h12v4H0z"/><path fill="#ffd500" d="M0 4h12v3H0z"/><path fill="#e0bc00" d="M0 7h12v1H0z"/></svg> Leaflet</a> | © OpenStreetMap contributors</div>
          </div>
        </section>

        <section class="card details">
          <h3 class="details-head"><svg class="icon icon-20"><use href="#i-map"/></svg>Property Details</h3>
          <form>
            <div class="rows rows-top">
              <div class="field">
                <label for="location"><svg class="icon green"><use href="#i-map"/></svg>Search Location</label>
                <div class="search"><input class="control" id="location" type="text" placeholder="Type address (e.g., Mumbai, Maharashtra)"><button class="search-btn" type="button">🔍 Search</button></div>
              </div>
              <div class="field">
                <label for="name">Property Name *</label>
                <input class="control" id="name" type="text" placeholder="e.g., North Field, Rice Paddy">
              </div>
              <div class="field">
                <label for="area">Calculated Area</label>
                <output class="area" id="area">📐 Draw polygon on map</output>
              </div>
            </div>
            <div class="rows rows-rest">
              <div class="field">
                <label for="crop"><svg class="icon green"><use href="#i-leaf"/></svg>Current Crop</label>
                <input class="control" id="crop" type="text" placeholder="e.g., Wheat, Rice, Cotton">
                <p class="hint">💡 Choose from 398+ crops or type to search</p>
              </div>
              <div class="field">
                <label for="soil"><svg class="icon brown"><use href="#i-mountain"/></svg>Soil Type</label>
                <select class="control select" id="soil"><option>Alluvial</option><option>Black</option><option>Red</option></select>
              </div>
              <div class="field">
                <label for="irrigation"><svg class="icon blue"><use href="#i-drop"/></svg>Irrigation Type</label>
                <select class="control select" id="irrigation"><option>Rainfed</option><option>Drip</option><option>Canal</option></select>
              </div>
              <button class="recommend" type="button"><svg class="icon"><use href="#i-leaf"/></svg>🌾 Get Crop Recommendations (1000+ Crops)</button>
              <div class="field">
                <label for="papers">Property Papers (images/PDF, max 5)</label>
                <input class="file" id="papers" type="file" multiple>
              </div>
              <div class="notice"><span class="notice-icon">⚠️</span><strong>No Verified Documents</strong></div>
            </div>
          </form>
        </section>
      </div>
    </main>
  </div>
  <div class="scrollbar" aria-hidden="true"><div class="scrollbar-thumb"></div></div>
  <button class="assistant" type="button" aria-label="AI assistant"><svg class="icon icon-24"><use href="#i-robot"/></svg><span class="assistant-badge">AI</span></button>
</div>
</body>
</html>
```
FILE: styles.css
```css
*, *::before, *::after { box-sizing: border-box; }

:root {
  --green: #1fa463;
  --ink: #374151;
  --line: #d1d5db;
}

body {
  margin: 0;
  font-family: Inter, "Noto Sans", sans-serif;
  font-size: 16px;
  line-height: 24px;
  color: #000;
}

h2, h3, p { margin: 0; }
a { color: inherit; text-decoration: none; }
button, input, select { font: inherit; color: inherit; }
button { cursor: pointer; }

.sprite { position: absolute; width: 0; height: 0; }
.icon { width: 16px; height: 16px; flex: none; fill: currentColor; }
.icon-14 { width: 14px; height: 14px; }
.icon-20 { width: 20px; height: 20px; }
.icon-24 { width: 24px; height: 24px; }
.icon-30 { width: 30px; height: 30px; color: var(--green); }
.green { color: var(--green); }
.brown { color: #a1580f; }
.blue { color: #1d78b5; }

.app {
  display: flex;
  height: 100vh;
  overflow: hidden;
  border-top: 3px solid #3a3b43;
}

.window {
  flex: 1;
  min-width: 0;
  background: linear-gradient(135deg, #f4fdf4, #f1fcf5);
}

.container {
  width: 100%;
  max-width: 1536px;
  margin: 0 auto;
  padding: 0 16px;
}

/* Header */
.topbar {
  position: relative;
  z-index: 2;
  background: #fff;
  box-shadow: 0 4px 6px rgba(0, 0, 0, .1), 0 2px 4px rgba(0, 0, 0, .08);
}
.topbar-row { display: flex; align-items: center; justify-content: space-between; height: 64px; }
.brand { display: flex; align-items: center; gap: 8px; font-size: 20px; font-weight: 700; color: #1e2540; }
.brand-mark {
  display: grid;
  place-items: center;
  width: 40px;
  height: 40px;
  border-radius: 50%;
  background: var(--green);
  color: #fff;
}
.nav, .nav-account { display: flex; align-items: center; gap: 8px; }
.nav-account { padding-left: 8px; border-left: 1px solid #e2e8ec; }
.nav-link {
  display: flex;
  align-items: center;
  gap: 4px;
  height: 36px;
  padding: 0 8px;
  border: 0;
  border-radius: 8px;
  background: none;
  font-size: 14px;
  font-weight: 500;
  color: #3a3d4c;
  white-space: nowrap;
}
.nav-link-active { background: var(--green); color: #fff; }
.nav-logout { padding: 0 12px; background: #fef1f1; color: #e53030; }

/* Page */
.add-card {
  display: flex;
  justify-content: center;
  align-items: flex-start;
  height: 62px;
  margin-top: -12px;
  border-radius: 0 0 12px 12px;
  background: linear-gradient(90deg, #f1fdf6, #f8fdf8);
  box-shadow: 0 4px 6px rgba(0, 0, 0, .1), 0 2px 4px rgba(0, 0, 0, .06);
}
.page-title {
  display: flex;
  align-items: center;
  gap: 8px;
  margin: 32px 0 24px;
  font-size: 30px;
  line-height: 36px;
  font-weight: 700;
}
.columns {
  display: grid;
  grid-template-columns: repeat(3, minmax(0, 1fr));
  gap: 24px;
  align-items: start;
}
.card {
  border-radius: 12px;
  background: #fff;
  box-shadow: 0 4px 6px rgba(0, 0, 0, .1), 0 2px 4px rgba(0, 0, 0, .06);
}

/* Map */
.map-card { grid-column: span 2; padding: 24px; }
.map {
  position: relative;
  height: 600px;
  border-radius: 12px;
  overflow: hidden;
  background: #f2efe9;
}
.map-art { display: block; width: 100%; height: 100%; }
.map-art path { stroke-linejoin: round; }
.road, .dots, .river, .border, .riverborder, .state, .trunk, .rail { fill: none; }
.town { fill: #dad9d8; }
.dots { stroke: #dddcda; stroke-width: 10; stroke-linecap: round; }
.road { stroke: #cac9cb; stroke-width: 3; }
.river { stroke: #a9d3df; stroke-width: 5; }
.river.wide { stroke-width: 9; }
.water { fill: #a9d3df; }
.forest { fill: #bddab1; }
.park { fill: #d3e3c5; }
.border { stroke: #c0abc0; stroke-width: 4; stroke-dasharray: 20 5 5 5; }
.border.thick { stroke-width: 5; stroke-dasharray: 24 6; }
.riverborder { stroke: #8c9cba; stroke-width: 6; stroke-dasharray: 24 4; }
.state { stroke: #f5c274; stroke-width: 5; }
.trunk { stroke: #f8987f; stroke-width: 6; }
.trunk.thin { stroke-width: 5; }
.rail { stroke: #77777a; stroke-width: 4; }
.peak { fill: #d08f4a; }
.shield-state { fill: #f7e3cc; stroke: #dca683; }
.shield-national { fill: #f4d5cc; stroke: #dca693; }
.map-art text { font-family: "Noto Sans", sans-serif; }
.shield-text { font-size: 10px; fill: #6b3322; text-anchor: middle; }
.place { font-size: 11px; fill: #262630; }
.city { font-size: 14px; }
.district { font-size: 10px; fill: #8f7d97; font-style: italic; }
.upright { font-style: normal; }
.place text, .district text { stroke: rgba(255, 255, 255, .8); stroke-width: 3px; paint-order: stroke; stroke-linejoin: round; }

.map-tools { position: absolute; top: 10px; left: 10px; display: grid; row-gap: 10px; }
.tool-group { border: 2px solid rgba(0, 0, 0, .2); border-radius: 4px; background: #fff; background-clip: padding-box; }
.tool-group:last-child { margin-top: 2px; }
.tool-group button { display: grid; justify-items: center; align-content: start; width: 30px; height: 30px; padding: 0; border: 0; background: none; }
.tool-group button:first-child { border-bottom: 1px solid #ccc; }
.tool-group svg { display: block; width: 28px; height: 28px; }
.tool-group-off { background-color: #f4f4f4; }
.glyph { fill: #3f3f46; }
.glyph-gray { fill: #99979e; stroke: #3f3f46; }
.glyph-line { stroke: #000; stroke-width: 2; }
.glyph-thin { fill: none; stroke: #3f3f46; stroke-width: 1.5; }
.layers {
  position: absolute;
  top: 10px;
  right: 10px;
  display: grid;
  place-items: center;
  width: 48px;
  height: 48px;
  padding: 0;
  border: 2px solid rgba(0, 0, 0, .2);
  border-radius: 5px;
  background: #fff;
  background-clip: padding-box;
}
.layers svg { width: 26px; height: 26px; }
.attribution {
  position: absolute;
  right: 0;
  bottom: 0;
  padding: 0 5px;
  background: rgba(255, 255, 255, .8);
  font: 12px/17px "Liberation Sans", Arial, sans-serif;
  color: #333;
}
.attribution a { color: #1a74b0; }

/* Property details */
.details { background: #faf9f8; }
.details-head {
  display: flex;
  align-items: center;
  gap: 8px;
  height: 60px;
  padding: 0 16px;
  border-radius: 12px 12px 0 0;
  background: linear-gradient(90deg, #4ade80, #22c55e 50%, #10b981);
  font-size: 20px;
  font-weight: 700;
  color: #fff;
}
.rows { display: flex; flex-direction: column; gap: 16px; }
.rows-top { padding: 24px 24px 0; background: #fff; }
.rows-rest { padding: 16px 24px 24px; }
.field { display: flex; flex-direction: column; gap: 8px; }
.field label { display: flex; align-items: center; gap: 8px; font-weight: 500; color: var(--ink); }
.control {
  width: 100%;
  min-width: 0;
  height: 42px;
  padding: 8px 16px;
  border: 1px solid var(--line);
  border-radius: 8px;
  background: #fff;
}
.control::placeholder { color: #9ca3af; }
.select { height: 40px; background: #efefef; }
.search { display: flex; gap: 8px; }
.search .control { height: 44px; }
.search-btn {
  flex: none;
  padding: 0 16px;
  border: 2px solid var(--green);
  border-radius: 8px;
  background: #fff;
  font-weight: 500;
  color: var(--green);
}
.area {
  padding: 12px;
  border: 2px solid #bbf4d4;
  border-radius: 8px;
  background: #f0fdf8;
  font-size: 24px;
  line-height: 32px;
  font-weight: 700;
  text-align: center;
  color: var(--green);
}
.hint { font-size: 12px; line-height: 16px; color: #6b7280; }
.recommend {
  display: flex;
  align-items: center;
  justify-content: center;
  gap: 8px;
  height: 48px;
  padding: 0;
  border: 0;
  border-radius: 12px;
  background: linear-gradient(135deg, #22c55e, #059669);
  box-shadow: 0 10px 15px rgba(0, 0, 0, .1), 0 4px 6px rgba(0, 0, 0, .05);
  font-weight: 600;
  color: #fff;
}
.file { width: 100%; height: 26px; font-size: 14px; line-height: 20px; }
.file::file-selector-button { height: 26px; font: inherit; }
.notice {
  display: flex;
  align-items: flex-start;
  gap: 8px;
  min-height: 120px;
  padding: 16px;
  border: 2px solid #fbdc4b;
  border-radius: 12px;
  background: #fffde8;
  line-height: 32px;
  color: #8c4d10;
}
.notice-icon { font-size: 24px; }

/* Scrollbar and assistant button */
.scrollbar { display: grid; grid-template-rows: 197fr 531fr 325fr; width: 8px; background: #f0fde6; }
.scrollbar-thumb { grid-row: 2; border-radius: 4px; background: #8cf0b8; }
.assistant {
  position: fixed;
  right: 32px;
  bottom: 24px;
  z-index: 3;
  display: grid;
  place-items: center;
  width: 60px;
  height: 60px;
  padding: 0 4px 0 0;
  border: 0;
  border-radius: 50%;
  background: linear-gradient(90deg, #22c55e, #059669);
  box-shadow: 0 20px 25px rgba(0, 0, 0, .06), 0 8px 24px rgba(0, 0, 0, .05);
  color: #fff;
}
.assistant-badge {
  position: absolute;
  top: -4px;
  right: -4px;
  width: 20px;
  height: 20px;
  border-radius: 50%;
  background: #e53a3a;
  font-size: 12px;
  line-height: 20px;
  font-weight: 700;
  text-align: center;
}
```
